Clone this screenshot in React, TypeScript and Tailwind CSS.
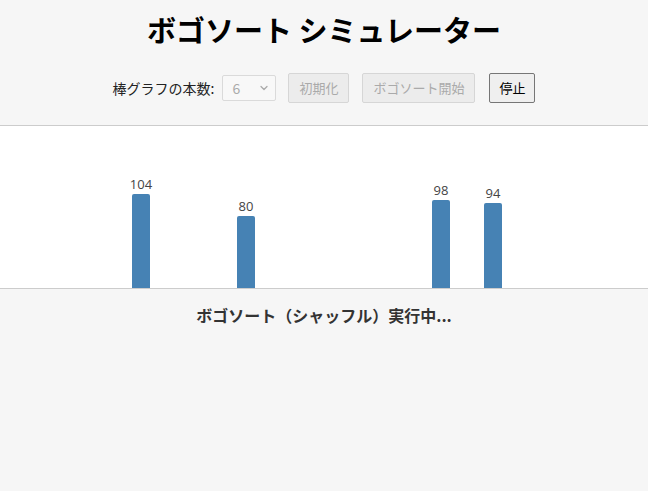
import { ChevronDown } from "lucide-react";

interface BarItem {
  value: number;
  left: number;
}

const bars: BarItem[] = [
  { value: 104, left: 132 },
  { value: 80, left: 237 },
  { value: 98, left: 432 },
  { value: 94, left: 484 },
];

const Bar = ({ value, left }: BarItem) => {
  return (
    <div className="absolute bottom-0 flex w-[18px] flex-col items-center" style={{ left }}>
      <span className="mb-[3px] font-['Open_Sans',sans-serif] text-[13px] leading-[13px] text-[#444]">{value}</span>
      <div className="w-[18px] rounded-t-[2px] bg-[#4682b4]" style={{ height: Math.round(value * 0.9) }} />
    </div>
  );
};

const App = () => {
  return (
    <div className="min-h-[491px] bg-[#f6f6f6] font-['Noto_Sans_CJK_JP','Noto_Sans',sans-serif] text-[#111]">
      <h1 className="pt-[9px] text-center text-[29px] font-bold leading-[40px] text-black">ボゴソート シミュレーター</h1>

      <div className="mt-[24px] flex h-[30px] items-center justify-center">
        <span className="text-[14px] text-[#222]">棒グラフの本数:</span>
        <div className="ml-2 flex h-[26px] w-[54px] items-center justify-between rounded-[2px] border border-[#dadada] bg-[#f8f8f8] pl-[9px] pr-[5px] text-[14px] text-[#aaa]">
          <span>6</span>
          <ChevronDown size={12} strokeWidth={2.5} className="text-[#aaa]" />
        </div>
        <button disabled className="ml-3 h-[30px] w-[61px] rounded-[2px] border border-[#d6d6d6] bg-[#ececec] text-[13px] text-[#aaa]">
          初期化
        </button>
        <button disabled className="ml-[13px] h-[30px] w-[113px] rounded-[2px] border border-[#d6d6d6] bg-[#ececec] text-[13px] text-[#aaa]">
          ボゴソート開始
        </button>
        <button className="ml-[14px] h-[30px] w-[46px] rounded-[2px] border border-[#767676] bg-[#efefef] text-[13px] text-black">
          停止
        </button>
      </div>

      <div className="relative mt-[22px] h-[164px] border-y border-[#cccccc] bg-white">
        {bars.map((b) => (
          <Bar key={b.left} value={b.value} left={b.left} />
        ))}
      </div>

      <p className="mt-[14px] text-center text-[16px] font-bold leading-[24px] text-[#333]">ボゴソート（シャッフル）実行中...</p>
    </div>
  );
};

export default App;
